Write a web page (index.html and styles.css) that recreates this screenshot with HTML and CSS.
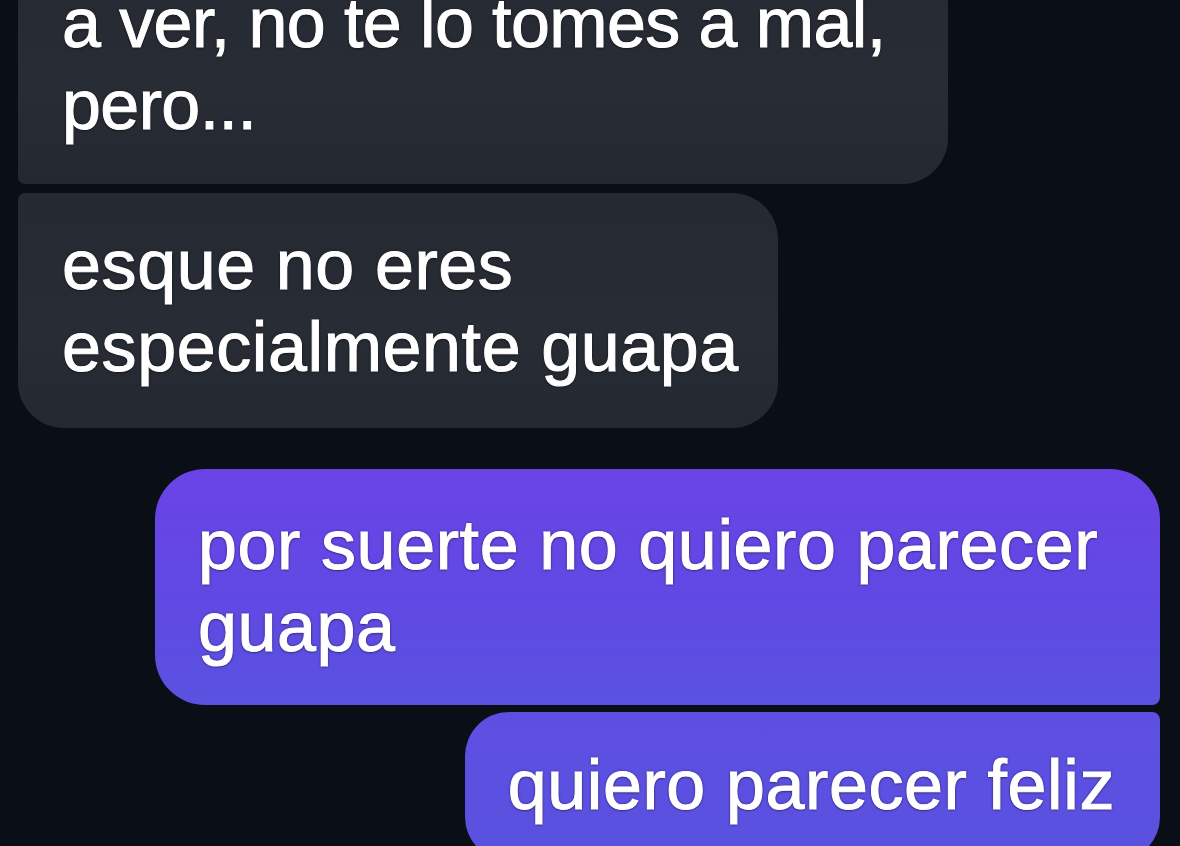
FILE: index.html
```html
<!DOCTYPE html>
<html>
<head>
    <title>Chat</title>
    <link rel="stylesheet" href="styles.css">
</head>
<body>
    <!-- conversación -->
    <div class="chat">
        <div class="bubble in first">a ver, no te lo tomes a mal, pero...</div>
        <div class="bubble in last">esque no eres especialmente guapa</div>

        <div class="bubble out first">por suerte no quiero parecer guapa</div>
        <div class="bubble out last">quiero parecer feliz</div>
    </div>
</body>
</html>
```

FILE: styles.css
```css
body {
    margin: 0;
    background-color: #0a0e16;
    font-family: 'Liberation Sans', Arial, sans-serif;
    color: #fff;
    overflow: hidden;
    height: 846px;
}

.chat {
    display: flex;
    flex-direction: column;
    margin-top: -58px;
    padding: 0 20px 0 18px;
}

.bubble {
    box-sizing: border-box;
    padding: 35px 12px 35px 44px;
    font-size: 70px;
    line-height: 82px;
    letter-spacing: 0.6px;
    text-shadow: 0 0 3px rgba(0, 0, 0, 0.6), 0 1px 2px rgba(0, 0, 0, 0.45);
    -webkit-text-stroke: 1px #fff;
}

/* mensajes recibidos */
.in {
    align-self: flex-start;
    background: linear-gradient(180deg, #252932 0%, #282c35 60%, #24282f 100%);
}

.in.first {
    width: 930px;
    padding-top: 40px;
    padding-bottom: 38px;
    letter-spacing: -0.6px;
    border-radius: 46px 46px 46px 7px;
}

.in.last {
    width: 760px;
    margin-top: 9px;
    padding-top: 31px;
    padding-bottom: 40px;
    border-radius: 7px 46px 46px 46px;
}

/* mensajes enviados */
.out {
    align-self: flex-end;
    padding-left: 43px;
}

.out.first {
    width: 1005px;
    margin-top: 41px;
    padding-top: 35px;
    padding-bottom: 37px;
    border-radius: 50px 50px 8px 50px;
    background: linear-gradient(180deg, #6a43e6 0%, #6049e3 55%, #5952e0 100%);
}

.out.last {
    margin-top: 7px;
    padding-top: 32px;
    padding-right: 45px;
    border-radius: 44px 8px 44px 44px;
    background: linear-gradient(180deg, #5d4fe2 0%, #5a51e0 100%);
}
```
